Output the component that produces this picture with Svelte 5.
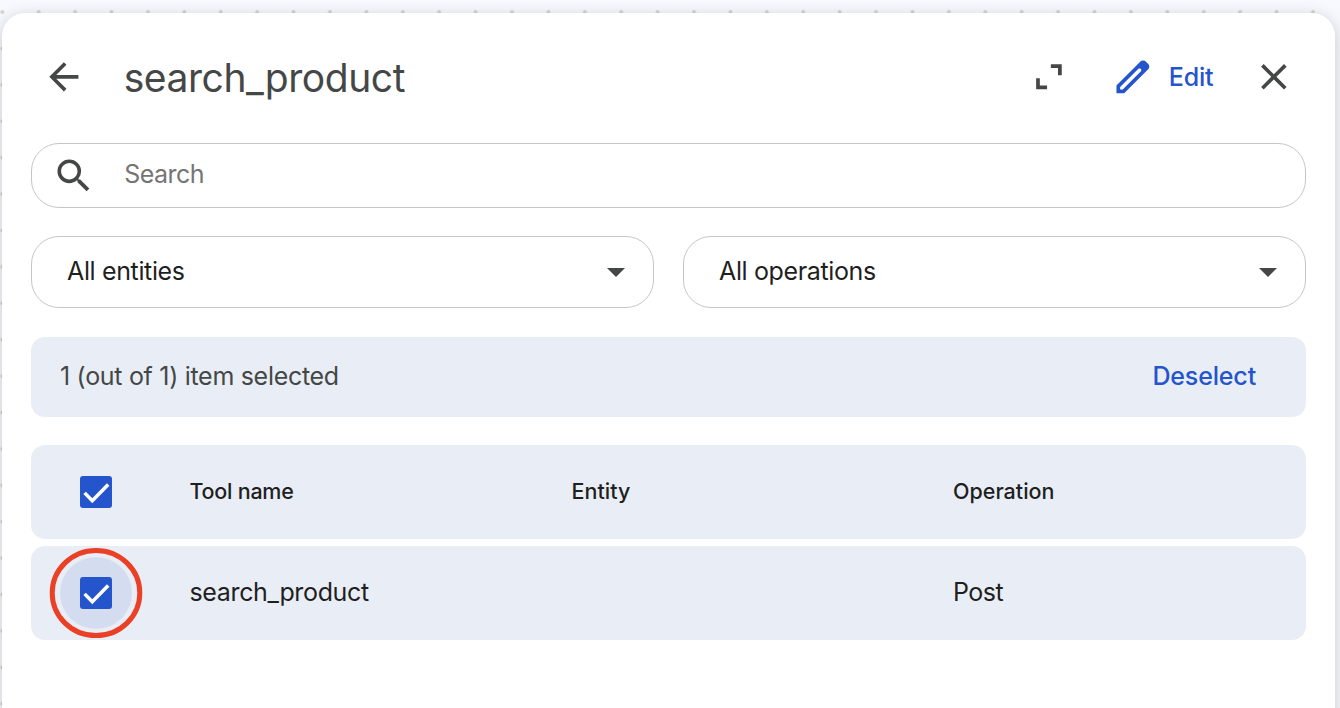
<script>
	const title = 'search_product';
	const filters = ['All entities', 'All operations'];

	let tools = $state([{ name: 'search_product', entity: '', operation: 'Post', selected: true }]);
	let query = $state('');

	let count = $derived(tools.filter((t) => t.selected).length);
	let allSelected = $derived(count === tools.length);

	function selectAll(value) {
		tools.forEach((t) => (t.selected = value));
	}
</script>

{#snippet checkbox(checked)}
	<svg class="box" class:checked viewBox="0 0 32 32">
		{#if checked}
			<path d="M4.6 16.9l7.7 7.9L28.2 8.6" fill="none" stroke="#fff" stroke-width="3.5" />
		{/if}
	</svg>
{/snippet}

<div class="canvas">
	<main class="panel">
		<header>
			<button class="icon back" aria-label="Back">
				<svg viewBox="0 -960 960 960">
					<path d="m313-440 224 224-57 56-320-320 320-320 57 56-224 224h487v80H313Z" />
				</svg>
			</button>
			<h1>{title}</h1>
			<button class="icon expand" aria-label="Expand">
				<svg viewBox="0 0 44 44">
					<path d="M23 9.3H34V20.3H30.2V13H23zM8.2 23.5H11.9V30.8H19.2V34.5H8.2z" />
				</svg>
			</button>
			<button class="edit">
				<svg viewBox="0 0 24 24">
					<path
						fill-rule="evenodd"
						d="M3 21v-4.25L16.2 3.58q.3-.28.66-.43T17.63 3q.4 0 .77.15t.65.45l1.38 1.4q.3.27.43.65t.14.75q0 .4-.14.76t-.43.67L7.25 21zM5 19h1.43L16.6 8.83 16.6 7.9 16.1 7.4 15.2 7.4 5 17.58z"
					/>
				</svg>
				<span>Edit</span>
			</button>
			<button class="icon" aria-label="Close">
				<svg viewBox="0 0 24 24">
					<path d="M19 6.41L17.59 5 12 10.59 6.41 5 5 6.41 10.59 12 5 17.59 6.41 19 12 13.41 17.59 19 19 17.59 13.41 12z" />
				</svg>
			</button>
		</header>

		<label class="search">
			<svg viewBox="0 0 24 24">
				<path
					d="M15.5 14h-.79l-.28-.27A6.471 6.471 0 0 0 16 9.5 6.5 6.5 0 1 0 9.5 16c1.61 0 3.09-.59 4.23-1.57l.27.28v.79l5 4.99L20.49 19l-4.99-5zm-6 0C7.01 14 5 11.99 5 9.5S7.01 5 9.5 5 14 7.01 14 9.5 11.99 14 9.5 14z"
				/>
			</svg>
			<input placeholder="Search" bind:value={query} />
		</label>

		<div class="filters">
			{#each filters as filter}
				<button class="select">
					<span>{filter}</span>
					<svg viewBox="0 0 18 9"><path d="M0 0h18L9 9z" /></svg>
				</button>
			{/each}
		</div>

		<div class="selection">
			<span>{count} (out of {tools.length}) item selected</span>
			<button onclick={() => selectAll(false)}>Deselect</button>
		</div>

		<div class="row head">
			<button class="check" aria-label="Select all" onclick={() => selectAll(!allSelected)}>
				{@render checkbox(allSelected)}
			</button>
			<span class="tool">Tool name</span>
			<span>Entity</span>
			<span>Operation</span>
		</div>
		{#each tools as tool}
			<div class="row">
				<button class="check active" aria-label="Select {tool.name}" onclick={() => (tool.selected = !tool.selected)}>
					{@render checkbox(tool.selected)}
					<svg class="ring" viewBox="0 0 94 92">
						<ellipse cx="47" cy="46" rx="43.8" ry="42.6" fill="none" stroke="#ea4025" stroke-width="5" />
					</svg>
				</button>
				<span class="name">{tool.name}</span>
				<span>{tool.entity}</span>
				<span class="post">{tool.operation}</span>
			</div>
		{/each}
	</main>
</div>

<style>
	:global(body) {
		overflow: hidden;
	}

	.canvas {
		box-sizing: border-box;
		height: 708px;
		padding: 13px 5px 0 2px;
		overflow: hidden;
		background-color: #f8f9fe;
		background-image: radial-gradient(circle, #d2d2d2 1.7px, transparent 2.3px);
		background-size: 36.42px 36.42px;
		background-position: -15.9px -6.2px;
		font-family: Inter, 'Liberation Sans', sans-serif;
		font-size: 25px;
		color: #1f1f1f;
	}

	.panel {
		box-sizing: border-box;
		height: 760px;
		padding: 0 29px;
		background: #fff;
		border-radius: 23px;
		box-shadow: 0 4px 15px 1px rgba(60, 64, 67, 0.24);
	}

	button {
		padding: 0;
		border: 0;
		background: none;
		font: inherit;
		color: inherit;
		cursor: pointer;
	}

	svg {
		display: block;
		fill: #444746;
	}

	span {
		padding-bottom: 2px;
	}

	header {
		display: flex;
		align-items: center;
		box-sizing: border-box;
		height: 130px;
		padding: 0 10px 2px 11px;
	}

	.icon svg,
	.edit svg,
	.search svg {
		width: 43.7px;
		height: 43.7px;
	}

	h1 {
		flex: 1;
		margin: 0 0 0 38px;
		font-size: 39px;
		font-weight: 400;
		letter-spacing: -0.43px;
		color: #444746;
	}

	.edit {
		display: flex;
		align-items: center;
		gap: 14.5px;
		margin: 0 39px 0 38.5px;
		font-weight: 500;
		letter-spacing: -0.2px;
		color: #2455cc;
	}

	.edit span {
		padding-bottom: 0;
	}

	.edit svg {
		fill: #2455cc;
	}

	.search {
		display: flex;
		align-items: center;
		box-sizing: border-box;
		height: 65px;
		padding: 0 28px 0 20px;
		border: 1px solid #c4c7c5;
		border-radius: 28px;
	}

	input {
		flex: 1;
		margin-left: 28.5px;
		padding: 0 0 3px;
		border: 0;
		outline: 0;
		background: none;
		font: inherit;
		letter-spacing: -0.5px;
	}

	input::placeholder {
		color: #757575;
	}

	.filters {
		display: flex;
		gap: 29px;
		margin: 28px 0 29px;
	}

	.select {
		display: flex;
		flex: 1;
		align-items: center;
		justify-content: space-between;
		box-sizing: border-box;
		height: 72px;
		padding: 0 28px 0 35px;
		border: 1px solid #c4c7c5;
		border-radius: 28px;
		letter-spacing: -0.36px;
	}

	.select svg {
		width: 18px;
		height: 9px;
	}

	.selection {
		display: flex;
		align-items: center;
		justify-content: space-between;
		height: 80px;
		margin-bottom: 28px;
		padding: 0 50px 0 29px;
		border-radius: 14px;
		background: #e9eef6;
		letter-spacing: -0.3px;
		color: #444746;
	}

	.selection button {
		padding-bottom: 2px;
		font-weight: 500;
		letter-spacing: -0.15px;
		color: #2455cc;
	}

	.row {
		display: grid;
		grid-template-columns: 158.5px 382px 381.5px 1fr;
		align-items: center;
		height: 94px;
		margin-bottom: 7px;
		border-radius: 14px;
		background: #e9eef6;
	}

	.head {
		font-size: 21.5px;
		font-weight: 500;
	}

	.tool {
		letter-spacing: -0.25px;
	}

	.name {
		letter-spacing: -0.35px;
	}

	.post {
		letter-spacing: -0.5px;
	}

	.check {
		position: relative;
		display: flex;
		align-items: center;
		justify-content: center;
		width: 72px;
		height: 72px;
		margin-left: 29px;
		border-radius: 50%;
	}

	.active {
		background: #d4dcf0;
	}

	.box {
		box-sizing: border-box;
		width: 32px;
		height: 32px;
		border: 3px solid #444746;
		border-radius: 3px;
	}

	.box.checked {
		border: 0;
		background: #2455cc;
	}

	/* highlight drawn over the row's edge */
	.ring {
		position: absolute;
		top: -10.5px;
		left: -11px;
		width: 94px;
		height: 92px;
	}
</style>
